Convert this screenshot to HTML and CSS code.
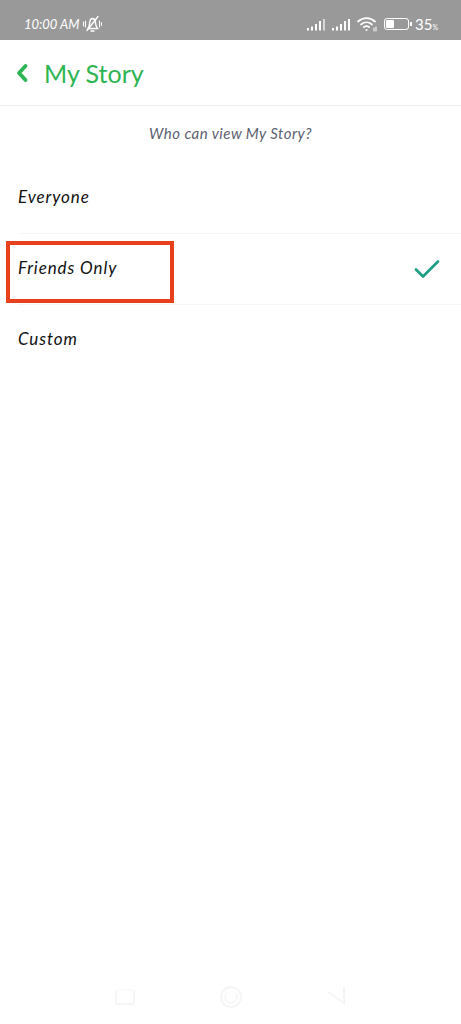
FILE: index.html
```html
<!DOCTYPE html>
<html lang="en">
<head>
<meta charset="UTF-8" />
<meta name="viewport" content="width=device-width, initial-scale=1" />
<title>My Story</title>
<link rel="stylesheet" href="styles.css">
</head>
<body>

<div class="status-bar">
  <div class="status-left">
    <span>10:00 AM</span>
    <svg class="bell" width="21" height="18" viewBox="0 0 20 18" fill="none" stroke="#fff" stroke-width="1.400" stroke-linecap="round">
      <path d="M5.500 13.500c1.500-2 1.500-3.500 1.800-6.500 .3-2 1.700-3.500 2.700-3.500s2.500 1.500 2.800 3.500c.3 3 .7 4.500 2.200 6.500z" />
      <path d="M8.500 16h3" />
      <path d="M4.500 15.500L15.500 1.500" />
      <path d="M1 7v4M3 6v6M17 6v6M19 7.500v3" stroke-width="1.100" />
    </svg>
  </div>
  <div class="status-right">
    <svg width="22" height="13" viewBox="0 0 22 13" fill="#fff">
      <rect x="0" y="10" width="2" height="2.500" />
      <rect x="4" y="8.500" width="2" height="4" />
      <rect x="8" y="6" width="2" height="6.500" />
      <rect x="12" y="3" width="2" height="9.500" />
      <rect x="16" y="1" width="2" height="11.500" opacity=".6" />
    </svg>
    <svg width="22" height="13" viewBox="0 0 22 13" fill="#fff">
      <rect x="0" y="10" width="2" height="2.500" />
      <rect x="4" y="8.500" width="2" height="4" />
      <rect x="8" y="6" width="2" height="6.500" />
      <rect x="12" y="3" width="2" height="9.500" />
      <rect x="16" y="1" width="2" height="11.500" />
    </svg>
    <svg class="wifi" width="20" height="16" viewBox="0 0 20 16" fill="none" stroke="#fff" stroke-width="1.700" stroke-linecap="round">
      <path d="M1 5.500c5-4.500 12-4.500 17 0" />
      <path d="M4 8.500c3.300-3 7.700-3 11 0" />
      <path d="M6.800 11.200c1.700-1.400 3.700-1.400 5.400 0" />
      <circle cx="9.500" cy="14" r="1" fill="#fff" stroke="none" />
      <path d="M17 12v3M19 11v4" stroke-width="1" />
    </svg>
    <div class="battery"><div class="battery-level"></div></div>
    <div class="battery-tip"></div>
    <span class="percent">35<small>%</small></span>
  </div>
</div>

<header>
  <svg width="14" height="20" viewBox="0 0 14 20" fill="none" stroke="#2db553" stroke-width="3.800" stroke-linecap="round" stroke-linejoin="round">
    <path d="M10.500 3L4 10l6.500 7" />
  </svg>
  <h1>My Story</h1>
</header>

<main>
  <p class="prompt">Who can view My Story?</p>
  <ul class="options">
    <li>Everyone</li>
    <li class="selected">
      Friends Only
      <svg class="check" width="26" height="20" viewBox="0 0 26 20" fill="none" stroke="#1f9e84" stroke-width="2.700" stroke-linecap="round" stroke-linejoin="round">
        <path d="M2 10.500l7 7L24 2.500" />
      </svg>
      <div class="highlight"></div>
    </li>
    <li>Custom</li>
  </ul>
</main>

<footer>
  <div class="nav-square"></div>
  <div class="nav-circle"><div></div></div>
  <svg width="20" height="20" viewBox="0 0 20 20" fill="none" stroke="#f5f5f5" stroke-width="2" stroke-linecap="round">
    <path d="M1 5l16 11V1" />
  </svg>
</footer>

</body>
</html>
```

FILE: styles.css
```css
body {
  margin: 0;
  height: 1024px;
  display: flex;
  flex-direction: column;
  font-family: Lato, "Noto Sans", sans-serif;
  background: #fff;
  color: #111;
  overflow: hidden;
}
.status-bar {
  display: flex;
  justify-content: space-between;
  align-items: center;
  height: 40px;
  padding: 8px 23px 0 24px;
  box-sizing: border-box;
  background: #999;
  color: #fff;
  font-size: 13px;
  font-style: italic;
}
.status-left {
  display: flex;
  align-items: center;
  gap: 3px;
}
.status-right {
  display: flex;
  align-items: center;
  gap: 3px;
}
.battery {
  width: 25px;
  height: 12px;
  margin-left: 4px;
  padding: 1px;
  border: 1.500px solid #fff;
  border-radius: 3px;
  box-sizing: border-box;
}
.battery-level {
  width: 8px;
  height: 100%;
  border-radius: 1px;
  background: #fff;
}
.battery-tip {
  width: 2px;
  height: 4px;
  margin-left: -2px;
  background: #fff;
}
.percent {
  font-size: 15px;
  font-style: normal;
}
.percent small {
  font-size: 7px;
}
header {
  display: flex;
  align-items: center;
  gap: 15px;
  height: 65px;
  padding-left: 15px;
  border-bottom: 1px solid #f2f2f2;
}
h1 {
  margin: 0;
  font-size: 25px;
  font-weight: 400;
  color: #2db553;
}
.prompt {
  margin: 0;
  padding-top: 17px;
  height: 40px;
  font-size: 15px;
  line-height: 20px;
  font-style: italic;
  text-align: center;
  letter-spacing: .45px;
  color: #5c6170;
}
.options {
  margin: 0 0 0 18px;
  padding: 0;
  list-style: none;
}
.options li {
  position: relative;
  display: flex;
  justify-content: space-between;
  align-items: center;
  height: 71px;
  box-sizing: border-box;
  padding: 0 21px 4px 0;
  border-bottom: 1px solid #f5f5f5;
  font-size: 17px;
  font-style: italic;
  letter-spacing: .9px;
}
.options li:last-child {
  border-bottom: 0;
}
.check {
  margin-top: 3px;
}
.highlight {
  position: absolute;
  left: -12px;
  top: 7px;
  width: 160px;
  height: 54px;
  border: 4px solid #e8401c;
}
main {
  flex: 1;
}
footer {
  display: flex;
  justify-content: center;
  align-items: center;
  gap: 85px;
  height: 50px;
  padding-bottom: 4px;
  box-sizing: border-box;
}
.nav-square {
  width: 16px;
  height: 12px;
  border: 2px solid #f6f6f6;
  border-top-color: #fbfbfb;
  border-radius: 3px;
}
.nav-circle {
  display: flex;
  justify-content: center;
  align-items: center;
  width: 18px;
  height: 18px;
  border: 2px solid #f5f5f5;
  border-radius: 50%;
}
.nav-circle div {
  width: 10px;
  height: 10px;
  border: 2px solid #f7f7f7;
  border-top-color: #fff;
  border-radius: 50%;
}
```
